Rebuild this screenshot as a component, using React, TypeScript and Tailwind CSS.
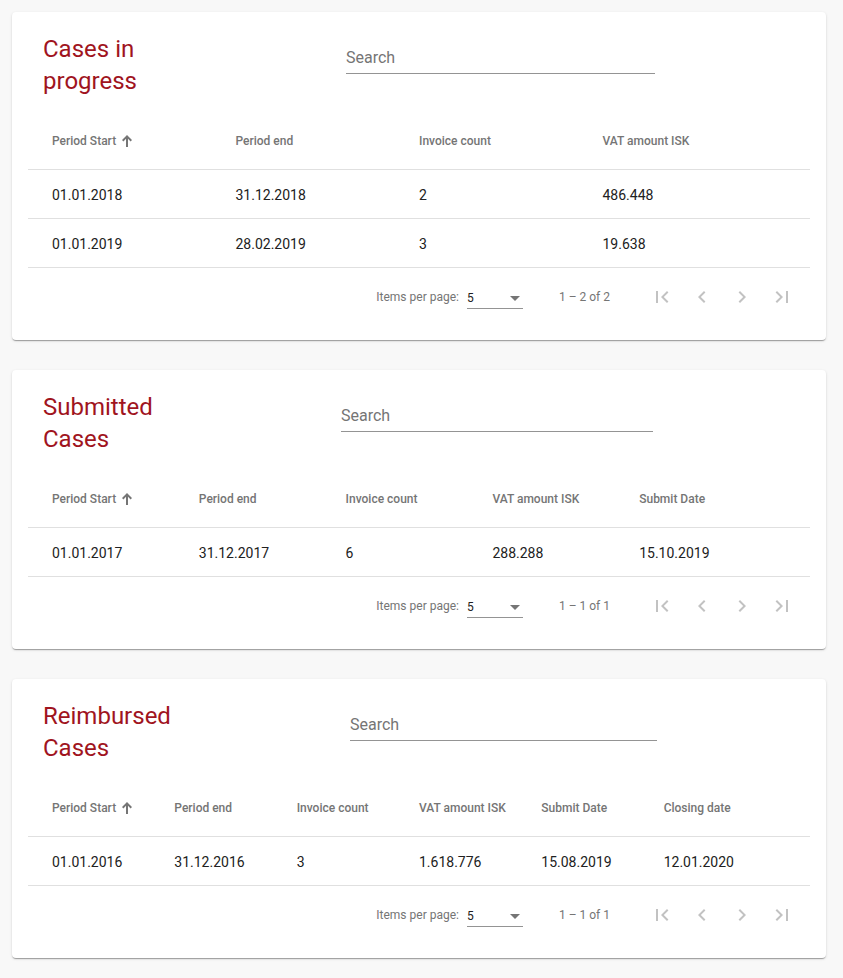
import React from 'react';

type CaseCard = {
  title: string;
  searchOffset: string;
  searchWidth: string;
  columns: string[];
  rows: string[][];
  range: string;
};

const CARDS: CaseCard[] = [
  {
    title: 'Cases in progress',
    searchOffset: 'w-[318px]',
    searchWidth: 'w-[309px]',
    columns: ['Period Start', 'Period end', 'Invoice count', 'VAT amount ISK'],
    rows: [
      ['01.01.2018', '31.12.2018', '2', '486.448'],
      ['01.01.2019', '28.02.2019', '3', '19.638'],
    ],
    range: '1 – 2 of 2',
  },
  {
    title: 'Submitted Cases',
    searchOffset: 'w-[313px]',
    searchWidth: 'w-[312px]',
    columns: ['Period Start', 'Period end', 'Invoice count', 'VAT amount ISK', 'Submit Date'],
    rows: [['01.01.2017', '31.12.2017', '6', '288.288', '15.10.2019']],
    range: '1 – 1 of 1',
  },
  {
    title: 'Reimbursed Cases',
    searchOffset: 'w-[322px]',
    searchWidth: 'w-[307px]',
    columns: ['Period Start', 'Period end', 'Invoice count', 'VAT amount ISK', 'Submit Date', 'Closing date'],
    rows: [['01.01.2016', '31.12.2016', '3', '1.618.776', '15.08.2019', '12.01.2020']],
    range: '1 – 1 of 1',
  },
];

const PAGER_ICONS = [
  'M18.41 16.59L13.82 12l4.59-4.59L17 6l-6 6 6 6zM6 6h2v12H6z',
  'M15.41 7.41L14 6l-6 6 6 6 1.41-1.41L10.83 12z',
  'M10 6L8.59 7.41 13.17 12l-4.58 4.59L10 18l6-6z',
  'M5.59 7.41L10.18 12l-4.59 4.59L7 18l6-6-6-6zM16 6h2v12h-2z',
];

function SortArrow() {
  return (
    <svg width="10" height="12" viewBox="0 0 10 12" className="ml-[6px]">
      <path d="M5 0L10 5 8.6 6.4 6 3.8V12H4V3.8L1.4 6.4 0 5z" fill="#757575" />
    </svg>
  );
}

function Card({ card }: { card: CaseCard }) {
  return (
    <div className="w-[814px] ml-3 bg-white rounded px-4 pt-[17px] pb-4 shadow-[0_2px_1px_-1px_rgba(0,0,0,0.2),0_1px_1px_0_rgba(0,0,0,0.14),0_1px_3px_0_rgba(0,0,0,0.12)]">
      <div className="flex h-[85px]">
        <div className={`${card.searchOffset} shrink-0 pl-[15px] pt-1`}>
          <h2 className="max-w-[150px] text-[24px] leading-8 text-[#a0141e] font-normal">{card.title}</h2>
        </div>
        <div className={`${card.searchWidth} mt-[18px] self-start pb-[4px] border-b border-[#949494]`}>
          <input
            placeholder="Search"
            className="block w-full h-[22px] leading-[22px] text-base text-[#212121] outline-none placeholder:text-[#757575] bg-transparent"
          />
        </div>
      </div>

      <div className="flex h-[56px] items-center px-6 pb-[2px] border-b border-[#e0e0e0]">
        {card.columns.map((c, i) => (
          <div key={c} className="flex-1 flex items-center text-xs font-medium text-[#757575]">
            {c}
            {i === 0 && <SortArrow />}
          </div>
        ))}
      </div>

      {card.rows.map((r, ri) => (
        <div key={ri} className="flex h-[49px] items-center px-6 pt-px border-b border-[#e0e0e0]">
          {r.map((v, i) => (
            <div key={i} className="flex-1 text-sm text-[#212121]">
              {v}
            </div>
          ))}
        </div>
      ))}

      <div className="flex h-[56px] justify-end items-center pr-2 pt-px text-xs text-[#757575]">
        <span className="mr-1">Items per page:</span>
        <div className="self-start mt-[21px] ml-1 w-14 flex items-center justify-between pb-[2px] border-b border-[#949494]">
          <span className="h-4 leading-4 text-[#212121]">5</span>
          <span className="w-0 h-0 mr-[3px] border-l-[5px] border-r-[5px] border-t-[5px] border-l-transparent border-r-transparent border-t-[#757575]" />
        </div>
        <span className="ml-[36px] mr-8">{card.range}</span>
        <div className="flex">
          {PAGER_ICONS.map((d, i) => (
            <button key={i} className="w-10 h-10 flex items-center justify-center" disabled>
              <svg width="24" height="24" viewBox="0 0 24 24">
                <path d={d} fill="#c2c2c2" />
              </svg>
            </button>
          ))}
        </div>
      </div>
    </div>
  );
}

export default function App() {
  return (
    <div className="min-h-screen bg-[#f8f8f8] pt-3 pb-5 flex flex-col gap-[30px] font-['Roboto',sans-serif]">
      {CARDS.map((c) => (
        <Card key={c.title} card={c} />
      ))}
    </div>
  );
}
